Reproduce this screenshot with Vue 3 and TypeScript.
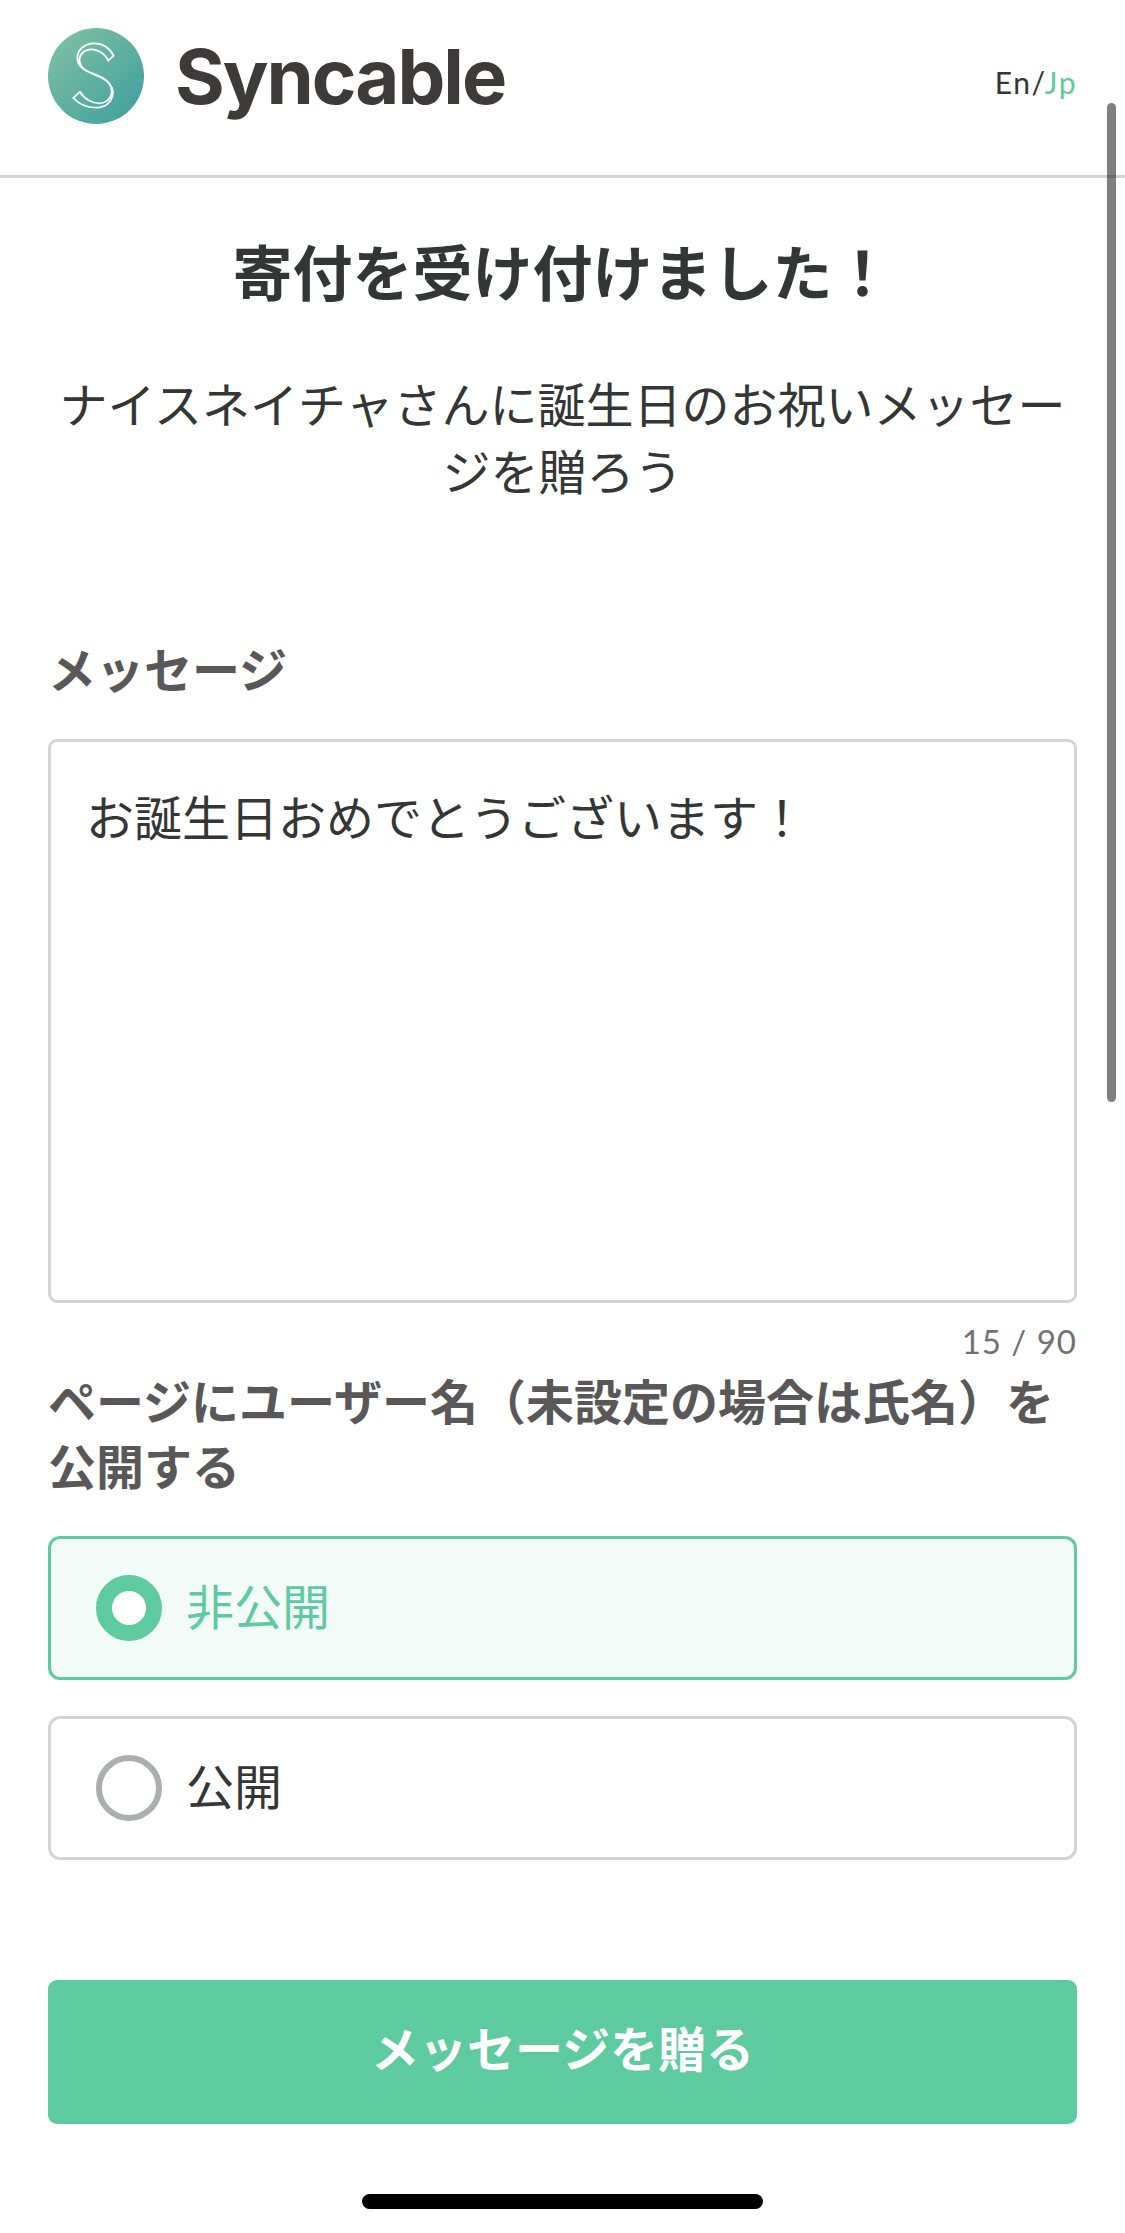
<template>
  <div class="page">
    <header class="header">
      <div class="brand">
        <svg class="logo" viewBox="0 0 96 96">
          <defs>
            <linearGradient id="logoFill" x1="0.15" y1="0.05" x2="0.9" y2="0.8">
              <stop offset="0" stop-color="#7dbfa3" />
              <stop offset="1" stop-color="#46a3a0" />
            </linearGradient>
          </defs>
          <circle cx="48" cy="48" r="48" fill="url(#logoFill)" />
          <path
            d="M65.7 27.7 C61 19 53 15 45 15.3 C36 16 29.5 22 29.3 30 C29.2 37 33 40.5 40 43.5 C48 47 54 48 59 53 C64 58 66 63 64.5 68 C63 74 58 78.5 52 79.3 C42 80.5 32 77 25.3 70 L32 63.7 C36 71 44 75.5 52 75.3 C58 75 63 71 63.7 64 C64 58 60 53 54 50 C47 46.5 41 45 36 41 C30 36 30 28 36 23.5 C43 19 55 22 60.3 32.7 Z"
            fill="none"
            stroke="#fff"
            stroke-width="1.8"
            stroke-linejoin="round"
          />
        </svg>
        <span class="wordmark">Syncable</span>
      </div>
      <div class="lang">En/<span class="active">Jp</span></div>
    </header>

    <main class="content">
      <h1 class="title">寄付を受け付けました！</h1>
      <p class="lead">ナイスネイチャさんに誕生日のお祝いメッセージを贈ろう</p>

      <div class="label message-label">メッセージ</div>
      <div class="textarea">{{ message }}</div>
      <div class="counter">{{ message.length }} / 90</div>

      <div class="label">ページにユーザー名（未設定の場合は氏名）を公開する</div>
      <div class="options">
        <div
          v-for="option in options"
          :key="option.value"
          class="option"
          :class="{ selected: selected === option.value }"
        >
          <span class="radio"></span>
          <span class="option-text">{{ option.label }}</span>
        </div>
      </div>

      <button class="submit">メッセージを贈る</button>
    </main>

    <div class="scrollbar"></div>
    <div class="home-indicator"></div>
  </div>
</template>

<script setup lang="ts">
import { ref } from "vue";

const message = ref("お誕生日おめでとうございます！");
const selected = ref("private");

const options = [
  { value: "private", label: "非公開" },
  { value: "public", label: "公開" },
];
</script>

<style>
html,
body {
  margin: 0;
  background: #fff;
}
</style>

<style scoped>
.page {
  position: relative;
  width: 1125px;
  height: 2233px;
  overflow: hidden;
  background: #fff;
  color: #333635;
  font-family: "Noto Sans CJK JP", "Noto Sans", sans-serif;
}

.header {
  display: flex;
  justify-content: space-between;
  height: 175px;
  padding: 0 48px;
  border-bottom: 3px solid #d3d5d5;
}

.brand {
  display: flex;
  align-items: center;
  gap: 31px;
  height: 152px;
}

.logo {
  width: 96px;
  height: 96px;
}

.wordmark {
  font-family: Inter, sans-serif;
  font-size: 76px;
  font-weight: 700;
  letter-spacing: -2px;
  color: #3e3a39;
}

.lang {
  margin-top: 62px;
  font-family: Lato, sans-serif;
  font-size: 30px;
  line-height: 40px;
  letter-spacing: 1.5px;
}

.lang .active {
  color: #5ecaa0;
}

.content {
  display: flex;
  flex-direction: column;
  padding: 0 48px;
}

.title {
  margin: 50px 0 0;
  font-size: 60px;
  font-weight: 700;
  line-height: 84px;
  text-align: center;
}

.lead {
  margin: 57px 0 0;
  font-size: 48px;
  line-height: 67px;
  text-align: center;
}

.label {
  margin-top: 3px;
  font-size: 48px;
  font-weight: 700;
  line-height: 65px;
  color: #595757;
}

.message-label {
  margin-top: 132px;
}

.textarea {
  box-sizing: border-box;
  height: 564px;
  margin-top: 39px;
  padding: 40px 35px;
  font-size: 48px;
  line-height: 67px;
  border: 3px solid #d3d5d5;
  border-radius: 9px;
}

.counter {
  margin-top: 15px;
  font-family: Lato, sans-serif;
  font-size: 33px;
  line-height: 46px;
  letter-spacing: 1px;
  text-align: right;
  color: #717171;
}

.options {
  display: flex;
  flex-direction: column;
  gap: 36px;
  margin-top: 39px;
}

.option {
  box-sizing: border-box;
  display: flex;
  align-items: center;
  gap: 24px;
  height: 144px;
  padding: 0 45px;
  font-size: 48px;
  border: 3px solid #d3d5d5;
  border-radius: 12px;
}

.option-text {
  padding-bottom: 8px;
}

.option.selected {
  color: #5ecaa0;
  background: #f2fbf8;
  border-color: #5ecaa0;
}

.radio {
  box-sizing: border-box;
  width: 66px;
  height: 66px;
  background: #fff;
  border: 6px solid #adafaf;
  border-radius: 50%;
}

.selected .radio {
  border: 16px solid #5ecaa0;
}

.submit {
  height: 144px;
  margin-top: 120px;
  padding: 0 0 12px;
  font-family: inherit;
  font-size: 48px;
  font-weight: 700;
  color: #fff;
  background: #5ecaa0;
  border: none;
  border-radius: 9px;
}

.scrollbar {
  position: absolute;
  top: 103px;
  left: 1107px;
  width: 9px;
  height: 999px;
  background: rgba(0, 0, 0, 0.5);
  border-radius: 5px;
}

.home-indicator {
  position: absolute;
  top: 2194px;
  left: 362px;
  width: 401px;
  height: 15px;
  background: #000;
  border-radius: 8px;
}
</style>
